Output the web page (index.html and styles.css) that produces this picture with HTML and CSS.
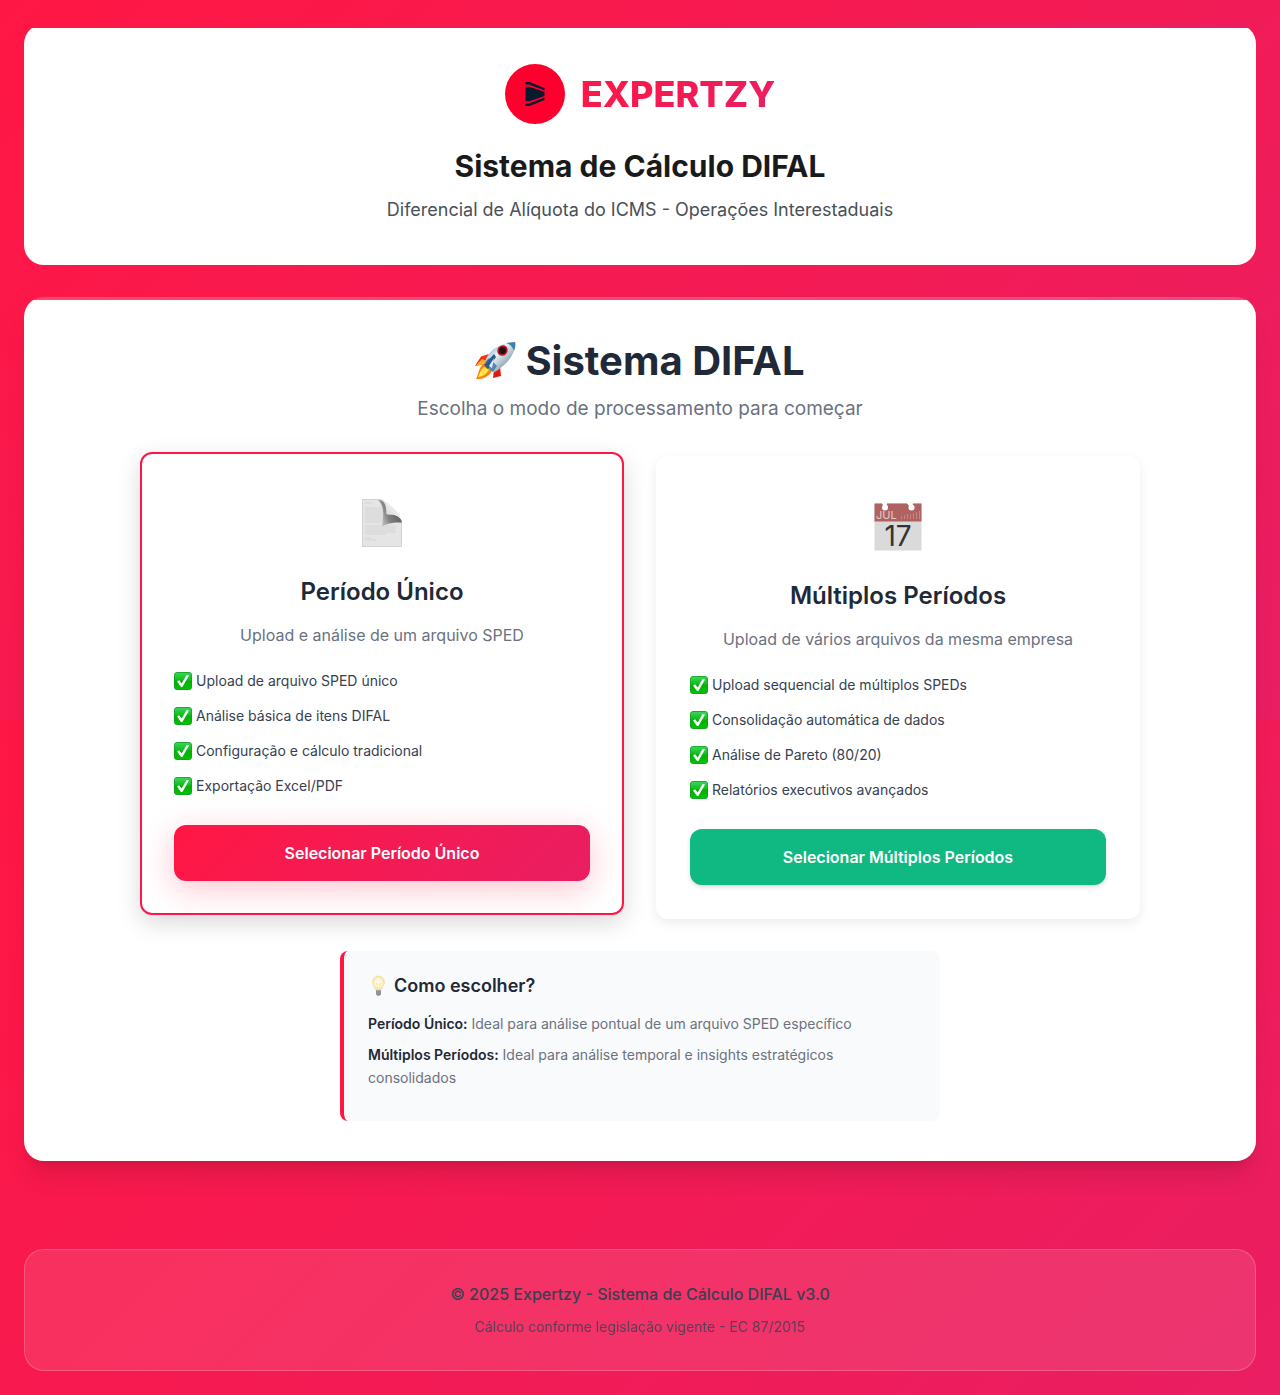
FILE: index.html
```html
<!DOCTYPE html>
<html lang="pt-BR">
<head>
<meta charset="utf-8">
<meta name="viewport" content="width=device-width, initial-scale=1">
<title>Expertzy - Sistema de Cálculo DIFAL</title>
<link rel="stylesheet" href="styles.css">
</head>
<body>
<svg width="0" height="0" class="defs" aria-hidden="true">
  <defs>
    <linearGradient id="green" x1="0" y1="0" x2="0" y2="1"><stop offset="0" stop-color="#3ad65a"/><stop offset=".45" stop-color="#0fbc1c"/><stop offset=".5" stop-color="#02b004"/><stop offset="1" stop-color="#04c204"/></linearGradient>
    <symbol id="check" viewBox="0 0 18 18">
      <rect width="18" height="18" rx="3.500" fill="#0f9e22"/>
      <rect x=".7" y=".7" width="16.600" height="16.600" rx="2.800" fill="url(#green)"/>
      <path d="M3 9.500 5.200 8.200 7.600 11.400 12.600 3 15 3.600 8.400 15 7 15Z" fill="#fff"/>
    </symbol>
  </defs>
</svg>
<div class="page">
  <header class="panel header">
    <div class="brand">
      <svg class="logo" viewBox="0 0 60 60" role="img" aria-label="Logo Expertzy">
        <circle cx="30" cy="30" r="30" fill="#ff002e"/>
        <g fill="#071a2f">
          <path d="M20.500 22.800H24.500L39.500 28V32L24.500 37.300H20.500Z"/>
          <path d="M20.500 18H24.500L39.500 24V26.600L24 20.600H20.500Z"/>
          <path d="M20.500 42H24.500L39.500 36V33.400L24 39.400H20.500Z"/>
        </g>
      </svg>
      <span class="brand-name">EXPERTZY</span>
    </div>
    <h1 class="header-title">Sistema de Cálculo DIFAL</h1>
    <p class="header-subtitle">Diferencial de Alíquota do ICMS - Operações Interestaduais</p>
  </header>

  <main class="panel main">
    <h2 class="main-title">
      <svg class="rocket" viewBox="0 0 42 40" aria-hidden="true">
        <defs><linearGradient id="hull" x1="0" y1="0" x2="1" y2="1"><stop offset=".15" stop-color="#74a5d4"/><stop offset=".4" stop-color="#eef4f7"/><stop offset=".65" stop-color="#a5b9c5"/><stop offset="1" stop-color="#3f5f78"/></linearGradient></defs>
        <path d="M14 13 6 15.500 0 25 10 23Z" fill="#f6320d"/>
        <path d="M1 24.500 7 18 12 20 9 23.500Z" fill="#ffb12b"/>
        <path d="M25 25 26 35 18 37 19 29Z" fill="#e01a09"/>
        <path d="M8 23C3 28 4 33 1 38 8 39 14 35 17 30L12 22Z" fill="#f8850b"/>
        <path d="M9 26C5 29 5 33 3 36 8 36 12 32 14 29Z" fill="#ffe44c"/>
        <path d="M10 21C13 10 24 2 40 1 41 11 35 21 20 31L15 29Z" fill="url(#hull)"/>
        <path d="M31 2 40 1C41 4 40 7 39 10 38 6 35 3 31 2Z" fill="#3f7db5"/>
        <path d="M10 21 14 17 22 25 18 31 15 29Z" fill="#5286b5"/>
        <path d="M9 24 19 13 21 16 13 28Z" fill="#2b5a8c"/>
        <path d="M14 25 19 17 17 27Z" fill="#e3edf5"/>
        <ellipse cx="27.500" cy="9.500" rx="5" ry="5.500" transform="rotate(40 27.500 9.500)" fill="#b8161f"/>
        <circle cx="27.500" cy="9.500" r="3.400" fill="#1c1115"/>
      </svg>
      <span>Sistema DIFAL</span>
    </h2>
    <p class="main-subtitle">Escolha o modo de processamento para começar</p>

    <div class="modes">
      <section class="mode mode-selected">
        <div class="mode-icon">
          <svg class="icon" viewBox="0 0 48 48" aria-hidden="true">
            <defs><linearGradient id="curl" x1="0" y1="1" x2=".7" y2=".2"><stop offset="0" stop-color="#999"/><stop offset=".4" stop-color="#ddd"/><stop offset="1" stop-color="#f6f6f6"/></linearGradient>
            <linearGradient id="shade" x1="1" y1=".6" x2="0" y2="1"><stop offset="0" stop-color="#5c5c5c"/><stop offset=".5" stop-color="#808080"/><stop offset="1" stop-color="#e2e2e2"/></linearGradient></defs>
            <path d="M4.500 .5H22C29 1 29 12 30 17 38 16 43 19 43.500 24V47.500H4.500Z" fill="#e5e5e5" stroke="#d2d2d2"/>
            <path d="M7 4h7M7 9h17M7 11h18M7 13h18M7 15h19M7 17h19M7 19h18M7 21h19M7 23h17M7 27h31M7 29h31M7 31h30M7 33h31M7 35h21M7 39h6M7 41h11" stroke="#c4c4c4" stroke-width=".5"/>
            <path d="M20 1C28 1 28 9 28.500 15 38 15 43 18 44 23.500 34 23 29 25 24 27 26 16 26 6 20 1Z" fill="url(#shade)"/>
            <path d="M22 0C29 2 29 9 29 15.500 37 15 42 17 44 21 43 16 31 2 22 0Z" fill="url(#curl)"/>
          </svg>
        </div>
        <h3 class="mode-title">Período Único</h3>
        <p class="mode-text">Upload e análise de um arquivo SPED</p>
        <ul class="features">
          <li><svg class="check" aria-hidden="true"><use href="#check"/></svg>Upload de arquivo SPED único</li>
          <li><svg class="check" aria-hidden="true"><use href="#check"/></svg>Análise básica de itens DIFAL</li>
          <li><svg class="check" aria-hidden="true"><use href="#check"/></svg>Configuração e cálculo tradicional</li>
          <li><svg class="check" aria-hidden="true"><use href="#check"/></svg>Exportação Excel/PDF</li>
        </ul>
        <button type="button" class="btn btn-primary">Selecionar Período Único</button>
      </section>

      <section class="mode">
        <div class="mode-icon">
          <svg class="icon" viewBox="0 0 48 48" aria-hidden="true">
            <path d="M.5 .5H47.500V47.500H.5Z" fill="#dadada"/>
            <path d="M.5 .5H8L10 3H12L13 .5H33L36 4H38L39 .5H47.500V18.500H.5Z" fill="#b06161"/>
            <path d="M8 0H13L12 4H10ZM33 0H39L38 4H36Z" fill="#fff"/>
            <circle cx="11" cy="4.500" r="3" fill="#fff"/><circle cx="37.500" cy="4.500" r="3" fill="#fff"/>
            <path d="M27.500 16V13M30.500 16V12M33.500 16V11M36.500 16V11M39.500 16V10M42.500 16V9M45.500 16V8" stroke="#c48585" stroke-width="1"/>
            <text x="2" y="16" class="cal-month">JUL</text>
            <text x="24" y="43" text-anchor="middle" class="cal-day">17</text>
          </svg>
        </div>
        <h3 class="mode-title">Múltiplos Períodos</h3>
        <p class="mode-text">Upload de vários arquivos da mesma empresa</p>
        <ul class="features">
          <li><svg class="check" aria-hidden="true"><use href="#check"/></svg>Upload sequencial de múltiplos SPEDs</li>
          <li><svg class="check" aria-hidden="true"><use href="#check"/></svg>Consolidação automática de dados</li>
          <li><svg class="check" aria-hidden="true"><use href="#check"/></svg>Análise de Pareto (80/20)</li>
          <li><svg class="check" aria-hidden="true"><use href="#check"/></svg>Relatórios executivos avançados</li>
        </ul>
        <button type="button" class="btn btn-success">Selecionar Múltiplos Períodos</button>
      </section>
    </div>

    <aside class="help">
      <h4 class="help-title">
        <svg class="bulb" viewBox="0 0 22 22" aria-hidden="true">
          <defs><radialGradient id="glow"><stop offset="0" stop-color="#fffef6"/><stop offset=".6" stop-color="#fdf6d2"/><stop offset="1" stop-color="#f5e29a"/></radialGradient></defs>
          <path d="M7.500 15C7.500 12 4.500 10.500 4.500 7A6 6 0 0 1 16.500 7C16.500 10.500 13.500 12 13.500 15Z" fill="url(#glow)" stroke="#eadba6" stroke-width=".6"/>
          <path d="M9.500 14 8.500 8 10.500 10 12.500 8 11.500 14" fill="none" stroke="#f3dd8c" stroke-width=".6"/>
          <path d="M8 15h5v4l-1.500 2h-2L8 19Z" fill="#a9a9a6"/>
          <path d="M8 17h5M8 19h5" stroke="#666" stroke-width=".7"/>
        </svg>
        <span>Como escolher?</span>
      </h4>
      <p><strong>Período Único:</strong> Ideal para análise pontual de um arquivo SPED específico</p>
      <p><strong>Múltiplos Períodos:</strong> Ideal para análise temporal e insights estratégicos consolidados</p>
    </aside>
  </main>

  <footer class="footer">
    <p class="footer-main">© 2025 Expertzy - Sistema de Cálculo DIFAL v3.0</p>
    <p class="footer-note">Cálculo conforme legislação vigente - EC 87/2015</p>
  </footer>
</div>
</body>
</html>
```
FILE: styles.css
```css
:root {
  --primary: #ff1744;
  --secondary: #e91e63;
  --brand: linear-gradient(135deg, var(--primary) 0%, var(--secondary) 100%);
  --ink: #1f2937;
  --muted: #6b7280;
}

* { box-sizing: border-box; margin: 0; padding: 0; }

body {
  background: var(--brand) 0 0 / 100% 720px;
  color: #212529;
  font-family: Inter, "Liberation Sans", sans-serif;
  font-size: 16px;
  line-height: 26px;
}

.defs { position: absolute; }

.page {
  display: flex;
  flex-direction: column;
  padding: 24px;
}

.panel {
  padding: 40px;
  border-radius: 20px;
  text-align: center;
}

.header {
  margin-bottom: 32px;
  background: linear-gradient(90deg, var(--primary), var(--secondary)) top / 100% 4px no-repeat #fff;
}

.brand {
  display: flex;
  align-items: center;
  justify-content: center;
  gap: 16px;
  margin-bottom: 24px;
}

.logo { width: 60px; height: 60px; }

.brand-name {
  background: var(--brand);
  background-clip: text;
  -webkit-background-clip: text;
  color: transparent;
  font-size: 36px;
  font-weight: 800;
  line-height: 58px;
}

.header-title {
  margin-bottom: 10px;
  color: #1a1a1a;
  font-size: 30px;
  font-weight: 700;
  line-height: 36px;
}

.header-subtitle {
  color: #495057;
  font-size: 18px;
  line-height: 31px;
}

.main {
  background: linear-gradient(90deg, #ff456a, #ed4b82) top / 100% 3px no-repeat #fff;
  box-shadow: 0 20px 25px -5px rgba(0, 0, 0, .1), 0 8px 10px -6px rgba(0, 0, 0, .1);
}

.main-title {
  display: flex;
  align-items: center;
  justify-content: center;
  gap: 8px;
  margin-bottom: 8px;
  color: var(--ink);
  font-size: 40px;
  font-weight: 700;
  line-height: 48px;
}

.rocket { width: 42px; height: 40px; }

.main-subtitle {
  margin-bottom: 32px;
  color: var(--muted);
  font-size: 19px;
  line-height: 31px;
}

.modes {
  display: grid;
  grid-template-columns: repeat(auto-fit, minmax(300px, 1fr));
  gap: 32px;
  max-width: 1000px;
  margin: 0 auto 32px;
}

.mode {
  padding: 32px;
  border: 2px solid transparent;
  border-radius: 12px;
  background: #fff;
  box-shadow: 0 4px 12px rgba(0, 0, 0, .08);
}

.mode-selected {
  border-color: var(--primary);
  box-shadow: 0 8px 25px rgba(0, 0, 0, .15);
  transform: translateY(-4px);
}

.mode-icon {
  display: flex;
  align-items: center;
  justify-content: center;
  height: 74px;
  margin-bottom: 17px;
}

.icon { width: 48px; height: 48px; }

.cal-month { fill: #e6c9c9; font-size: 11px; }
.cal-day { fill: #333; font-size: 28px; font-weight: 400; }

.mode-title {
  margin-bottom: 16px;
  color: var(--ink);
  font-size: 24px;
  font-weight: 600;
  line-height: 29px;
}

.mode-text {
  margin-bottom: 15px;
  color: var(--muted);
}

.features {
  margin-bottom: 22px;
  color: #374151;
  font-size: 14px;
  line-height: 35px;
  list-style: none;
}

.features li {
  display: flex;
  align-items: center;
  gap: 4px;
  text-align: left;
}

.check { flex: none; width: 18px; height: 18px; }

.btn {
  width: 100%;
  padding: 16px 32px;
  border: 0;
  border-radius: 12px;
  color: #fff;
  font: 600 16px/24px Inter, "Liberation Sans", sans-serif;
  cursor: pointer;
}

.btn-primary {
  background: var(--brand);
  box-shadow: 0 8px 32px rgba(255, 23, 68, .25);
}

.btn-success {
  background: #10b981;
  box-shadow: 0 2px 4px rgba(0, 0, 0, .15);
}

.help {
  max-width: 600px;
  margin: 0 auto;
  padding: 24px;
  border-left: 4px solid var(--primary);
  border-radius: 8px;
  background: #f9fafb;
  color: var(--muted);
  font-size: 14px;
  line-height: 23px;
  text-align: left;
}

.help-title {
  display: flex;
  align-items: center;
  gap: 4px;
  margin-bottom: 15px;
  color: var(--ink);
  font-size: 18px;
  font-weight: 600;
  line-height: 22px;
}

.bulb { width: 22px; height: 22px; }

.help p { margin-bottom: 8px; }

.help strong { color: var(--ink); font-weight: 600; }

.footer {
  margin-top: 88px;
  padding: 32px;
  border: 1px solid rgba(255, 255, 255, .2);
  border-radius: 20px;
  background: rgba(255, 255, 255, .1);
  color: #374151;
  text-align: center;
}

.footer-main { margin-bottom: 10px; font-weight: 500; line-height: 24px; }

.footer-note { font-size: 14px; line-height: 22px; opacity: .8; }
```
